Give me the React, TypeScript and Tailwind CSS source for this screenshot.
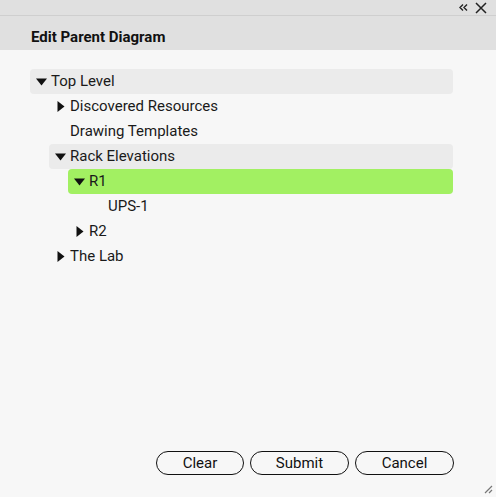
import React from 'react';

type Node = {
  label: string;
  depth: number;
  arrow?: 'down' | 'right';
  tone?: 'gray' | 'green';
};

const nodes: Node[] = [
  { label: 'Top Level', depth: 0, arrow: 'down', tone: 'gray' },
  { label: 'Discovered Resources', depth: 1, arrow: 'right' },
  { label: 'Drawing Templates', depth: 1 },
  { label: 'Rack Elevations', depth: 1, arrow: 'down', tone: 'gray' },
  { label: 'R1', depth: 2, arrow: 'down', tone: 'green' },
  { label: 'UPS-1', depth: 3 },
  { label: 'R2', depth: 2, arrow: 'right' },
  { label: 'The Lab', depth: 1, arrow: 'right' },
];

const indent = ['ml-0', 'ml-[19px]', 'ml-[38px]', 'ml-[57px]'];

const Arrow: React.FC<{ dir: 'down' | 'right' }> = ({ dir }) =>
  dir === 'down' ? (
    <svg width="11" height="8" viewBox="0 0 11 8" className="shrink-0">
      <path d="M0 0.5 L11 0.5 L5.5 7.5 Z" fill="#111" />
    </svg>
  ) : (
    <svg width="8" height="11" viewBox="0 0 8 11" className="shrink-0">
      <path d="M0.5 0 L7.5 5.5 L0.5 11 Z" fill="#111" />
    </svg>
  );

const App: React.FC = () => {
  return (
    <div
      className="w-[496px] h-[497px] flex flex-col bg-[#f7f7f7] relative overflow-hidden"
      style={{ fontFamily: 'Roboto, "Liberation Sans", sans-serif' }}
    >
      <div className="h-[16px] bg-[#e0e0e0] border-b border-[#cfcfcf] flex items-center justify-end pr-[9px] gap-[7px]">
        {/* collapse chevrons */}
        <svg width="9" height="7" viewBox="0 0 9 7">
          <path d="M4 0.5 L1 3.5 L4 6.5 M8 0.5 L5 3.5 L8 6.5" stroke="#222" strokeWidth="1.4" fill="none" />
        </svg>
        <svg width="12" height="12" viewBox="0 0 12 12">
          <path d="M1 1 L11 11 M11 1 L1 11" stroke="#222" strokeWidth="1.5" />
        </svg>
      </div>
      <div className="h-[34px] bg-[#e0e0e0] flex items-center pl-[31px]">
        <span className="text-[15px] font-bold text-[#111] mt-[8px]">Edit Parent Diagram</span>
      </div>
      <div className="flex-1 flex flex-col px-[30px] pt-[19px]">
        <div className="w-[423px] flex flex-col">
          {nodes.map((n) => (
            <div
              key={n.label}
              className={`h-[25px] flex items-center rounded-[4px] ${indent[n.depth]} ${
                n.tone === 'gray' ? 'bg-[#ebebeb]' : n.tone === 'green' ? 'bg-[#a2f062]' : ''
              }`}
            >
              <div className="w-[21px] flex items-center justify-center pl-[2px]">
                {n.arrow && <Arrow dir={n.arrow} />}
              </div>
              <span className="text-[15px] text-[#1a1a1a]">{n.label}</span>
            </div>
          ))}
        </div>
        <div className="mt-auto mb-[22px] flex justify-end gap-[6px] pr-[12px]">
          <button className="w-[88px] h-[24px] rounded-full border border-[#111] text-[15px] text-[#111] bg-transparent">
            Clear
          </button>
          <button className="w-[99px] h-[24px] rounded-full border border-[#111] text-[15px] text-[#111] bg-transparent">
            Submit
          </button>
          <button className="w-[99px] h-[24px] rounded-full border border-[#111] text-[15px] text-[#111] bg-transparent">
            Cancel
          </button>
        </div>
      </div>
      <svg width="10" height="10" viewBox="0 0 10 10" className="absolute right-[3px] bottom-[3px]">
        <path d="M9 2 L2 9 M9 6 L6 9" stroke="#777" strokeWidth="1.2" />
      </svg>
    </div>
  );
};

export default App;
